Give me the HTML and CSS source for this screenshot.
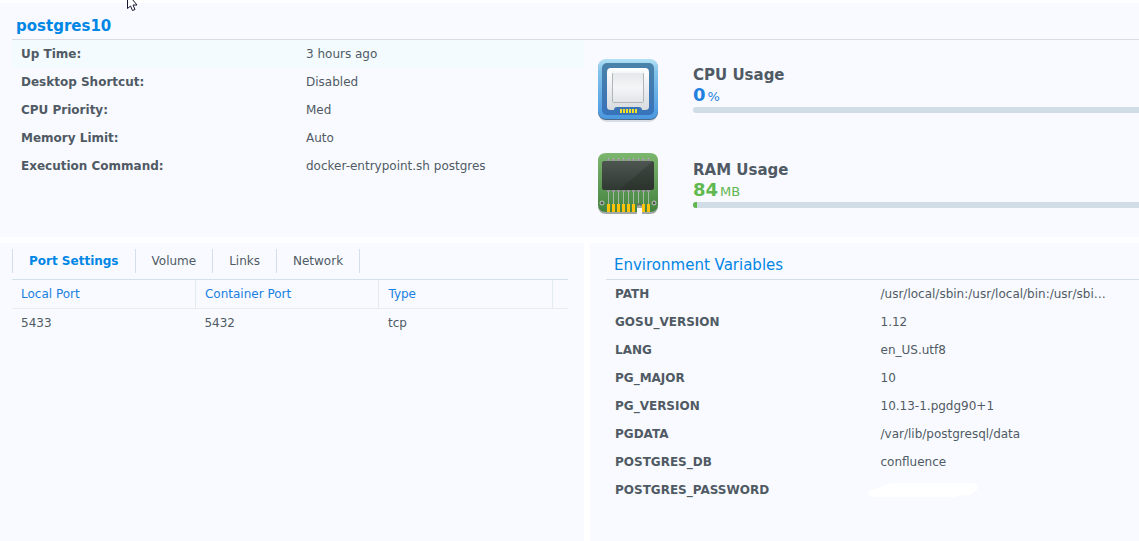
FILE: index.html
```html
<!DOCTYPE html>
<html lang="en">
<head>
    <meta charset="UTF-8">
    <meta name="viewport" content="width=device-width, initial-scale=1.0">
    <title>postgres10</title>
    <link rel="stylesheet" href="styles.css">
</head>
<body>
    <main class="page">
        <section class="panel overview">
            <h1 class="title">postgres10</h1>
            <div class="overview-body">
                <table class="info">
                    <tr class="hover"><th scope="row">Up Time:</th><td>3 hours ago</td></tr>
                    <tr><th scope="row">Desktop Shortcut:</th><td>Disabled</td></tr>
                    <tr><th scope="row">CPU Priority:</th><td>Med</td></tr>
                    <tr><th scope="row">Memory Limit:</th><td>Auto</td></tr>
                    <tr><th scope="row">Execution Command:</th><td>docker-entrypoint.sh postgres</td></tr>
                </table>
                <div class="usage">
                    <div class="meter">
                        <svg class="meter-icon" width="64" height="68" viewBox="0 0 64 68" aria-hidden="true">
                            <defs>
                                <linearGradient id="cpuFrame" x1="0" y1="0" x2="0" y2="1">
                                    <stop offset="0" stop-color="#b4e2f5"/>
                                    <stop offset=".2" stop-color="#83c3ea"/>
                                    <stop offset="1" stop-color="#4a98e0"/>
                                </linearGradient>
                                <linearGradient id="cpuWell" x1="0" y1="0" x2="0" y2="1">
                                    <stop offset="0" stop-color="#4a83a9"/>
                                    <stop offset="1" stop-color="#3872ba"/>
                                </linearGradient>
                                <linearGradient id="cpuBody" x1="0" y1="0" x2="0" y2="1">
                                    <stop offset="0" stop-color="#ffffff"/>
                                    <stop offset="1" stop-color="#d8dcdf"/>
                                </linearGradient>
                                <linearGradient id="cpuLid" x1="0" y1="0" x2="0" y2="1">
                                    <stop offset="0" stop-color="#e4e8ea"/>
                                    <stop offset=".5" stop-color="#f4f5f7"/>
                                    <stop offset="1" stop-color="#e2e5e8"/>
                                </linearGradient>
                            </defs>
                            <rect x="2" y="5" width="60" height="60" rx="9" fill="#8b98a5" opacity=".3"/>
                            <rect x="2" y="3" width="60" height="60" rx="8" fill="#4d6a89"/>
                            <rect x="2" y="2" width="60" height="60" rx="8" fill="url(#cpuFrame)"/>
                            <rect x="6" y="6" width="52" height="52" rx="5" fill="url(#cpuWell)"/>
                            <path d="M15 11h34a4 4 0 0 1 4 4v35q0 3-4 3h-3q0-3-3-3H21q-3 0-3 3h-3q-4 0-4-3V15a4 4 0 0 1 4-4z" fill="url(#cpuBody)"/>
                            <rect x="16.500" y="15.500" width="31" height="30" rx="1" fill="url(#cpuLid)" stroke="#b0b5b8"/>
                            <path d="M16 15h32" stroke="#f6f7f8" stroke-width="2"/>
                            <path d="M25 52v4M28 52v4M31 52v4M34 52v4M37 52v4M40 52v4" stroke="#f5df25" stroke-width="2"/>
                        </svg>
                        <div class="meter-data">
                            <h2 class="meter-name" id="cpu-name">CPU Usage</h2>
                            <div class="meter-value cpu"><strong>0</strong><span>%</span></div>
                            <div class="bar" role="meter" aria-labelledby="cpu-name" aria-valuenow="0"></div>
                        </div>
                    </div>
                    <div class="meter">
                        <svg class="meter-icon" width="64" height="68" viewBox="0 0 64 68" aria-hidden="true">
                            <defs>
                                <linearGradient id="ramBoard" x1="0" y1="0" x2="0" y2="1">
                                    <stop offset="0" stop-color="#7db66e"/>
                                    <stop offset="1" stop-color="#448340"/>
                                </linearGradient>
                                <linearGradient id="ramChip" x1="0" y1="0" x2="0" y2="1">
                                    <stop offset="0" stop-color="#4d5650"/>
                                    <stop offset="1" stop-color="#303832"/>
                                </linearGradient>
                            </defs>
                            <path d="M10 3h44q8 0 8 8v42q0 9-8 9H46v-6h-5v6H10q-8 0-8-9V11q0-8 8-8z" fill="#7d867f" opacity=".7"/>
                            <path d="M10 1h44q8 0 8 8v43q0 8-8 8H46v-7h-5v7H10q-8 0-8-8V9q0-8 8-8z" fill="url(#ramBoard)"/>
                            <path d="M12.500 6v4M17.500 6v4M22.500 6v4M27.500 6v4M32.500 6v4M37.500 6v4M42.500 6v4M47.500 6v4M52.500 6v4" stroke="#b4b9bb"/>
                            <path d="M12.500 40v13M17.500 40v13M22.500 40v13M27.500 40v13M32.500 40v13M37.500 40v13M42.500 40v13M47.500 40v13M52.500 40v13" stroke="#a5b8a3"/>
                            <path d="M11 39h3M16 39h3M21 39h3M26 39h3M31 39h3M36 39h3M41 39h3M46 39h3M51 39h3M11 8h3M16 8h3M21 8h3M26 8h3M31 8h3M36 8h3M41 8h3M46 8h3M51 8h3" stroke="#9a949f" stroke-width="2"/>
                            <rect x="6" y="9" width="52" height="29" rx="2" fill="url(#ramChip)"/>
                            <path d="M56 10h2v26l-2 2H23z" fill="#202722" opacity=".3"/>
                            <path d="M11 52v8M16 52v8M21 52v8M26 52v8M31 52v8M36 52v8M46 52v8M51 52v8" transform="translate(1.500 0)" stroke="#fdc30b" stroke-width="3"/>
                            <path d="M42 54v-2h3v2" fill="none" stroke="#56605a"/>
                            <g fill="#4a554c" stroke="#c6cdc5">
                                <circle cx="6" cy="51" r="2"/>
                                <circle cx="58" cy="51" r="2"/>
                            </g>
                        </svg>
                        <div class="meter-data">
                            <h2 class="meter-name" id="ram-name">RAM Usage</h2>
                            <div class="meter-value ram"><strong>84</strong><span>MB</span></div>
                            <div class="bar" role="meter" aria-labelledby="ram-name" aria-valuenow="84"><div class="bar-fill" style="width: 4px"></div></div>
                        </div>
                    </div>
                </div>
            </div>
        </section>

        <section class="panel settings">
            <nav class="tabs">
                <button class="tab active" type="button">Port Settings</button>
                <button class="tab" type="button">Volume</button>
                <button class="tab" type="button">Links</button>
                <button class="tab" type="button">Network</button>
            </nav>
            <table class="ports">
                <thead>
                    <tr><th class="port">Local Port</th><th class="port">Container Port</th><th>Type</th><th class="spacer"></th></tr>
                </thead>
                <tbody>
                    <tr><td>5433</td><td>5432</td><td>tcp</td><td></td></tr>
                </tbody>
            </table>
        </section>

        <section class="panel environment">
            <h2 class="env-title">Environment Variables</h2>
            <table class="info env">
                <tr><th scope="row">PATH</th><td>/usr/local/sbin:/usr/local/bin:/usr/sbi…</td></tr>
                <tr><th scope="row">GOSU_VERSION</th><td>1.12</td></tr>
                <tr><th scope="row">LANG</th><td>en_US.utf8</td></tr>
                <tr><th scope="row">PG_MAJOR</th><td>10</td></tr>
                <tr><th scope="row">PG_VERSION</th><td>10.13-1.pgdg90+1</td></tr>
                <tr><th scope="row">PGDATA</th><td>/var/lib/postgresql/data</td></tr>
                <tr><th scope="row">POSTGRES_DB</th><td>confluence</td></tr>
                <tr>
                    <th scope="row">POSTGRES_PASSWORD</th>
                    <td class="masked">
                        <svg width="110" height="14" viewBox="0 0 110 14" aria-hidden="true">
                            <path d="M3 7 13 4 20 1 27 0H106q3 0 4 4 0 3-4 4-1 3-4 4l-11 1-6 1H4Q0 14 0 10q1-2 3-3z" fill="#fff"/>
                        </svg>
                    </td>
                </tr>
            </table>
        </section>
    </main>

    <svg class="cursor" width="13" height="12" viewBox="0 0 13 12" aria-hidden="true">
        <path d="M.5-4v12.500l3-2.500 2 4.500 2.500-1-2-4.500h4L5-1z" fill="#fff" stroke="#15162c"/>
    </svg>
</body>
</html>
```
FILE: styles.css
```css
* {
    box-sizing: border-box;
}
body {
    margin: 0;
    background-color: #fff;
    color: #505a64;
    font-family: "DejaVu Sans", Verdana, sans-serif;
    font-size: 12px;
    line-height: 28px;
}
h1, h2 {
    margin: 0;
}
.page {
    display: grid;
    grid-template-columns: 584fr 549fr;
    grid-template-rows: auto 1fr;
    gap: 6px;
    min-height: 100vh;
    padding-top: 3px;
}
.panel {
    background-color: #f9faff;
    min-width: 0;
}
.overview {
    grid-column: 1 / 3;
    padding: 10px 0 17px 12px;
}
.title {
    border-bottom: 1px solid #d6dce2;
    padding-left: 4px;
    color: #0086e5;
    font-size: 15px;
    line-height: 26px;
}
.overview-body {
    display: grid;
    grid-template-columns: 572fr 543fr;
    gap: 12px;
}
.info {
    width: 100%;
    border-collapse: collapse;
    table-layout: fixed;
    align-self: start;
}
.info th, .info td {
    height: 28px;
    padding: 0 8px;
    text-align: left;
    white-space: nowrap;
}
.info th {
    width: 50%;
    padding-left: 9px;
}
.hover {
    background-color: #f3fbff;
}
.usage {
    display: flex;
    flex-direction: column;
    gap: 27px;
    padding-top: 17px;
}
.meter {
    display: flex;
    gap: 33px;
}
.meter-icon {
    flex: none;
}
.meter-data {
    flex: 1;
    padding-top: 8px;
}
.meter-name {
    font-size: 15px;
    line-height: 20px;
}
.meter-value {
    display: flex;
    align-items: baseline;
    gap: 2px;
    height: 22px;
    font-size: 13px;
    line-height: 20px;
}
.meter-value strong {
    font-size: 18px;
}
.cpu {
    color: #1f80e0;
}
.ram {
    color: #61b84f;
}
.bar {
    height: 6px;
    border-radius: 3px 0 0 3px;
    background-color: #d0dce6;
    overflow: hidden;
}
.bar-fill {
    height: 6px;
    background-color: #61b84f;
}
.settings {
    padding: 6px 16px 0 12px;
}
.tabs {
    display: flex;
    padding-bottom: 6px;
    border-bottom: 1px solid #d3e1ec;
}
.tab {
    height: 24px;
    padding: 0 16px;
    border: 0;
    border-right: 1px solid #d3dfea;
    background: none;
    color: inherit;
    font: inherit;
    line-height: 22px;
    cursor: pointer;
}
.tab:first-child {
    border-left: 1px solid #d3dfea;
}
.tab.active {
    color: #0086e5;
    font-weight: bold;
}
.ports {
    width: 100%;
    border-collapse: collapse;
    table-layout: fixed;
}
.ports th, .ports td {
    height: 28px;
    padding: 0 8px 0 9px;
    text-align: left;
}
.ports th {
    border-right: 1px solid #e3ebf2;
    border-bottom: 1px solid #e8edf2;
    color: #1880e0;
    font-weight: normal;
}
.ports .port {
    width: 33%;
}
.ports .spacer {
    width: 16px;
    padding: 0;
    border-right: 0;
}
.environment {
    padding: 8px 0 0 16px;
}
.env-title {
    border-bottom: 1px solid #d6dfe8;
    padding-left: 8px;
    color: #0086e5;
    font-size: 15px;
    font-weight: normal;
}
.info .masked {
    padding: 0;
}
.masked svg {
    display: block;
    margin-left: -5px;
}
.cursor {
    position: absolute;
    top: 0;
    left: 127px;
}
```
